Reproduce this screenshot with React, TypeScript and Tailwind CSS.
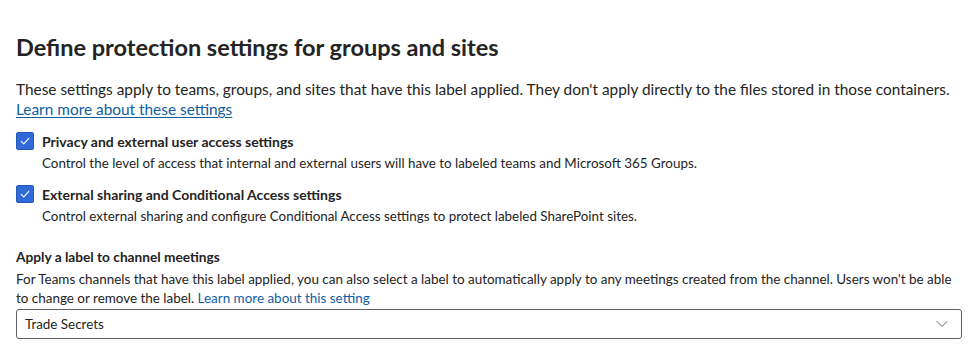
import React from "react";

const font = { fontFamily: 'Lato, "Open Sans", sans-serif' };

function Check() {
  return (
    <div className="w-[18px] h-[18px] shrink-0 rounded-[2px] bg-[#2f6ad8] border border-[#2458b8] flex items-center justify-center">
      <svg width="12" height="12" viewBox="0 0 12 12" fill="none">
        <path d="M2.2 6.3 L4.8 8.8 L9.8 3.4" stroke="white" strokeWidth="1.1" strokeLinecap="round" strokeLinejoin="round" />
      </svg>
    </div>
  );
}

export default function App() {
  return (
    <div className="w-[980px] h-[349px] bg-white text-[#242424] overflow-hidden" style={font}>
      <div className="pl-[16px] pr-[18px] pt-[32px]">
        <h1 className="text-[23.5px] leading-[30px] font-bold text-[#242424]">
          Define protection settings for groups and sites
        </h1>
        <p className="mt-[17px] text-[15.4px] leading-[20px] text-[#242424]">
          These settings apply to teams, groups, and sites that have this label applied. They don't apply directly to the files stored in those containers.
          <br />
          <a className="text-[#115ea3] underline underline-offset-2">Learn more about these settings</a>
        </p>
        <div className="mt-[13px] flex flex-col gap-[12px]">
          <div>
            <div className="flex items-center gap-[8px] h-[18px]">
              <Check />
              <span className="text-[14px] font-bold">Privacy and external user access settings</span>
            </div>
            <div className="pl-[26px] mt-[3px] text-[13.4px] leading-[20px]">
              Control the level of access that internal and external users will have to labeled teams and Microsoft 365 Groups.
            </div>
          </div>
          <div>
            <div className="flex items-center gap-[8px] h-[18px]">
              <Check />
              <span className="text-[14px] font-bold">External sharing and Conditional Access settings</span>
            </div>
            <div className="pl-[26px] mt-[3px] text-[13.4px] leading-[20px]">
              Control external sharing and configure Conditional Access settings to protect labeled SharePoint sites.
            </div>
          </div>
        </div>
        <div className="mt-[21px] text-[13.7px] leading-[20px] font-bold">Apply a label to channel meetings</div>
        <p className="mt-[3px] text-[13.45px] leading-[19px] text-[#242424] whitespace-nowrap">
          For Teams channels that have this label applied, you can also select a label to automatically apply to any meetings created from the channel. Users won't be able
          <br />
          to change or remove the label. <a className="text-[#115ea3]">Learn more about this setting</a>
        </p>
        <div className="mt-[1px] h-[30px] border border-[#616161] rounded-[3px] flex items-center justify-between pl-[8px] pr-[12px]">
          <span className="text-[13.4px]">Trade Secrets</span>
          <svg width="14" height="14" viewBox="0 0 14 14" fill="none">
            <path d="M2 4.5 L7 9.5 L12 4.5" stroke="#616161" strokeWidth="1" strokeLinecap="round" strokeLinejoin="round" />
          </svg>
        </div>
      </div>
    </div>
  );
}
